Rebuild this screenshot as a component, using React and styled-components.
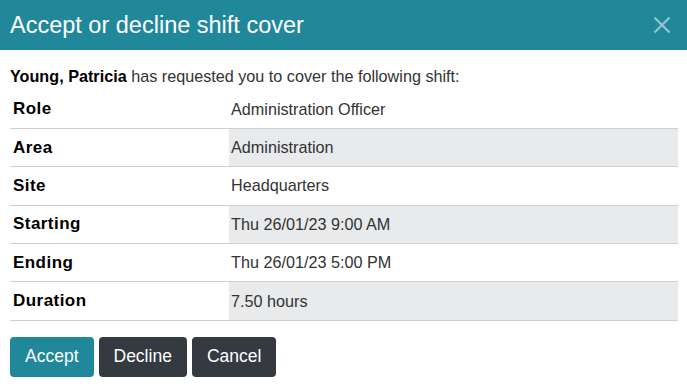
import React from "react";
import styled, { createGlobalStyle } from "styled-components";

const Global = createGlobalStyle`
  html, body { margin: 0; padding: 0; background: #fff; }
  body { font-family: "Liberation Sans", Arial, sans-serif; color: #333; }
`;

const Dialog = styled.div`
  width: 687px;
  height: 391px;
  background: #fff;
  display: flex;
  flex-direction: column;
`;

const Header = styled.header`
  height: 50px;
  background: #21879b;
  display: flex;
  align-items: center;
  justify-content: space-between;
  padding: 0 16px 0 10px;
  box-sizing: border-box;
`;

const Title = styled.h1`
  margin: 0;
  font-size: 23.5px;
  font-weight: normal;
  color: #fff;
  padding-top: 1px;
`;

const Close = styled.button`
  border: none;
  background: none;
  padding: 0;
  width: 18px;
  height: 18px;
  display: flex;
  align-items: center;
  justify-content: center;
  cursor: pointer;
`;

const Body = styled.div`
  padding: 17px 9px 0 10px;
  display: flex;
  flex-direction: column;
`;

const Intro = styled.p`
  margin: 0 0 4.5px;
  font-size: 16.2px;
  color: #333;
  line-height: 19px;
`;

const Name = styled.b`
  color: #000;
`;

const Table = styled.div`
  display: grid;
  grid-template-columns: 219px 1fr;
`;

const Label = styled.div`
  height: 38.4px;
  box-sizing: border-box;
  padding: 0 3px;
  display: flex;
  align-items: center;
  font-weight: bold;
  font-size: 17px;
  letter-spacing: 0.45px;
  color: #000;
  border-bottom: 1px solid #cdd0d1;
`;

const Value = styled.div`
  height: 38.4px;
  box-sizing: border-box;
  padding: 0 2px;
  display: flex;
  align-items: center;
  font-size: 16.2px;
  color: #333;
  background: ${(p) => (p.$striped ? "#e8eaeb" : "transparent")};
  border-bottom: 1px solid #cdd0d1;
`;

const Actions = styled.div`
  display: flex;
  gap: 5px;
  margin-top: 16px;
`;

const Button = styled.button`
  height: 40px;
  padding: 0 15px 0 15px;
  border: none;
  border-radius: 4px;
  font-family: "Liberation Sans", Arial, sans-serif;
  font-size: 17.5px;
  color: #fff;
  background: ${(p) => (p.$primary ? "#21879b" : "#343a3f")};
  cursor: pointer;
`;

const rows = [
  ["Role", "Administration Officer"],
  ["Area", "Administration"],
  ["Site", "Headquarters"],
  ["Starting", "Thu 26/01/23 9:00 AM"],
  ["Ending", "Thu 26/01/23 5:00 PM"],
  ["Duration", "7.50 hours"],
];

export default function App() {
  return (
    <>
      <Global />
      <Dialog>
        <Header>
          <Title>Accept or decline shift cover</Title>
          <Close aria-label="Close">
            <svg width="18" height="18" viewBox="0 0 18 18">
              <path d="M1.5 1.5 L16.5 16.5 M16.5 1.5 L1.5 16.5" stroke="#8fc6d0" strokeWidth="2.2" />
            </svg>
          </Close>
        </Header>
        <Body>
          <Intro>
            <Name>Young, Patricia</Name> has requested you to cover the following shift:
          </Intro>
          <Table>
            {rows.map(([k, v], i) => (
              <React.Fragment key={k}>
                <Label>{k}</Label>
                <Value $striped={i % 2 === 1}>{v}</Value>
              </React.Fragment>
            ))}
          </Table>
          <Actions>
            <Button $primary>Accept</Button>
            <Button>Decline</Button>
            <Button>Cancel</Button>
          </Actions>
        </Body>
      </Dialog>
    </>
  );
}
